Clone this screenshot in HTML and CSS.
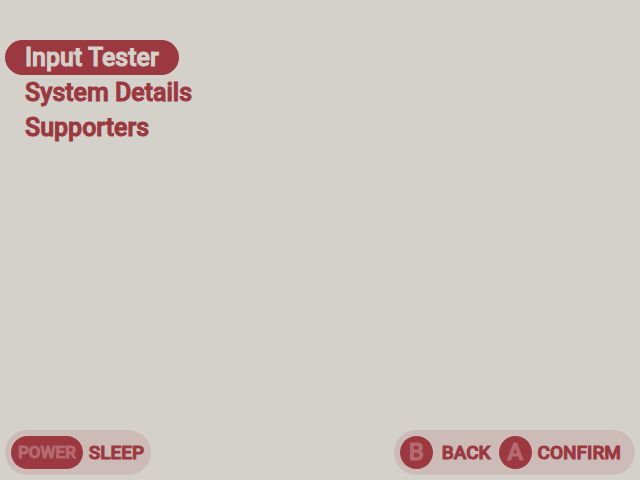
FILE: index.html
```
<!DOCTYPE html>
<html lang="en">
<head>
<meta charset="utf-8">
<meta name="viewport" content="width=device-width, initial-scale=1">
<title>Tools</title>
<link rel="stylesheet" href="styles.css">
</head>
<body>
<main>
  <nav class="menu" aria-label="Tools">
    <button type="button" class="item selected" aria-current="true">Input Tester</button>
    <button type="button" class="item">System Details</button>
    <button type="button" class="item">Supporters</button>
  </nav>
</main>
<footer class="hints">
  <div class="group">
    <button type="button" class="hint"><span class="key wide">POWER</span><span>SLEEP</span></button>
  </div>
  <div class="group">
    <button type="button" class="hint spaced"><span class="key">B</span><span>BACK</span></button>
    <button type="button" class="hint"><span class="key">A</span><span>CONFIRM</span></button>
  </div>
</footer>
</body>
</html>
```

FILE: styles.css
```
:root {
  --paper: #d4d0ca;
  --accent: #9b3840;
  --tint: #cdbbb8;
  --key-text: #b66b70;
}

* { box-sizing: border-box; }

body {
  margin: 0;
  min-height: 100vh;
  display: flex;
  flex-direction: column;
  background: var(--paper);
  color: var(--accent);
  font-family: Roboto, "Liberation Sans", sans-serif;
  font-weight: 500;
}

button {
  margin: 0;
  padding: 0;
  border: 0;
  background: none;
  color: inherit;
  font: inherit;
  -webkit-text-stroke: 1px currentColor;
  stroke-linejoin: round;
  white-space: nowrap;
  cursor: pointer;
}

main {
  flex: 1;
  padding: 40px 5px 0;
}

.menu {
  display: flex;
  flex-direction: column;
  align-items: flex-start;
}

.item {
  height: 35px;
  padding: 1px 20px 0;
  border-radius: 18px;
  font-size: 25px;
  line-height: 34px;
}

.item.selected {
  background: var(--accent);
  color: var(--paper);
}

.hints {
  display: flex;
  justify-content: space-between;
  padding: 0 5px 5px;
}

.group {
  display: flex;
  align-items: center;
  gap: 8px;
  height: 45px;
  padding: 0 14px 0 6px;
  border-radius: 23px;
  background: var(--tint);
}

.group:first-child { padding-right: 7px; }

.hint {
  display: flex;
  align-items: center;
  gap: 6px;
  font-size: 19px;
}

.hint.spaced { gap: 9px; }

.key {
  min-width: 33px;
  height: 33px;
  border-radius: 17px;
  background: var(--accent);
  color: var(--key-text);
  font-size: 24px;
  line-height: 33px;
  text-align: center;
}

.key.wide {
  padding: 0 7px;
  font-size: 17px;
}
```
